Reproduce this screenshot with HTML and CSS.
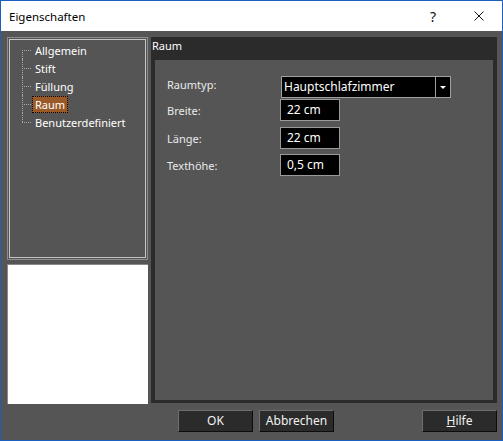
FILE: index.html
```html
<!DOCTYPE html>
<html lang="de">
<head>
    <meta charset="UTF-8">
    <title>Eigenschaften</title>
    <link rel="stylesheet" href="styles.css">
</head>
<body>
    <div class="window">
        <!-- Titelleiste -->
        <div class="titlebar">
            <span class="title">Eigenschaften</span>
            <div class="caption-btns">
                <span class="cap-btn help">?</span>
                <span class="cap-btn close">
                    <svg width="10" height="10" viewBox="0 0 10 10"><path d="M0.5 0.5 L9.5 9.5 M9.5 0.5 L0.5 9.5" stroke="#111" stroke-width="1" fill="none"/></svg>
                </span>
            </div>
        </div>

        <div class="dialog">
            <div class="main">
                <!-- Linke Spalte: Baum + Vorschau -->
                <div class="sidebar">
                    <div class="tree-frame">
                        <div class="tree-inner">
                            <ul class="tree">
                                <li><span class="node">Allgemein</span></li>
                                <li><span class="node">Stift</span></li>
                                <li><span class="node">Füllung</span></li>
                                <li><span class="node selected">Raum</span></li>
                                <li><span class="node">Benutzerdefiniert</span></li>
                            </ul>
                        </div>
                    </div>
                    <div class="preview"></div>
                </div>

                <!-- Rechte Seite -->
                <div class="page">
                    <div class="page-title">Raum</div>
                    <div class="page-body">
                        <div class="row row-type">
                            <span class="label label-top">Raumtyp:</span>
                            <div class="combo">
                                <span class="combo-text">Hauptschlafzimmer</span>
                                <span class="combo-btn"><span class="arrow"></span></span>
                            </div>
                        </div>
                        <div class="row row-width">
                            <span class="label">Breite:</span>
                            <span class="field">22 cm</span>
                        </div>
                        <div class="row row-length">
                            <span class="label">Länge:</span>
                            <span class="field">22 cm</span>
                        </div>
                        <div class="row">
                            <span class="label">Texthöhe:</span>
                            <span class="field">0,5 cm</span>
                        </div>
                    </div>
                </div>
            </div>

            <!-- Knöpfe -->
            <div class="buttons">
                <span class="btn">OK</span>
                <span class="btn">Abbrechen</span>
                <span class="btn btn-help"><u>H</u>ilfe</span>
            </div>
        </div>
    </div>
</body>
</html>
```

FILE: styles.css
```css
body {
    margin: 0;
    font-family: "Noto Sans", "Liberation Sans", sans-serif;
    font-size: 11px;
    background-color: #fff;
}

.window {
    width: 503px;
    height: 441px;
    box-sizing: border-box;
    border: 1px solid #1b5fbf;
    background-color: #555555;
    display: flex;
    flex-direction: column;
}

/* Titelleiste */
.titlebar {
    height: 30px;
    background-color: #fff;
    display: flex;
    align-items: center;
    justify-content: space-between;
}

.title {
    padding-left: 8px;
    font-size: 11.5px;
    color: #000;
}

.caption-btns {
    display: flex;
    height: 100%;
}

.cap-btn {
    width: 46px;
    height: 100%;
    display: flex;
    align-items: center;
    justify-content: center;
}

.help {
    font-size: 14px;
    color: #111;
    padding-bottom: 1px;
}

/* Dialog */
.dialog {
    flex: 1;
    padding: 6px 5px 8px 6px;
    display: flex;
    flex-direction: column;
}

.main {
    height: 367px;
    display: grid;
    grid-template-columns: 141px 1fr;
    column-gap: 3px;
}

.sidebar {
    display: grid;
    grid-template-rows: 223px 140px;
    row-gap: 4px;
}

.tree-frame {
    border: 1px solid #8c8c8c;
    padding: 1px;
}

.tree-inner {
    height: 100%;
    box-sizing: border-box;
    border: 1px solid #c4c4c4;
}

.tree {
    list-style: none;
    margin: 0;
    padding: 1px 0 0 0;
}

.tree li {
    position: relative;
    height: 18px;
    padding-left: 22px;
    display: flex;
    align-items: center;
}

/* Punktlinien des Baums */
.tree li::before {
    content: "";
    position: absolute;
    left: 12px;
    top: 9px;
    width: 9px;
    border-top: 1px dotted #a8a8a8;
}

.tree li::after {
    content: "";
    position: absolute;
    left: 12px;
    top: 0;
    height: 18px;
    border-left: 1px dotted #a8a8a8;
}

.tree li:first-child::after {
    top: 9px;
    height: 9px;
}

.tree li:last-child::after {
    height: 9px;
}

.node {
    color: #fff;
    padding: 0 2px;
    line-height: 15px;
    border: 1px solid transparent;
}

.node.selected {
    background-color: #995a28;
    border: 1px dotted #000;
}

.preview {
    background-color: #fff;
    border-top: 1px solid #8a8a8a;
    border-left: 1px solid #8a8a8a;
}

/* Rechte Seite */
.page {
    height: 366px;
    background-color: #2b2b2b;
    display: flex;
    flex-direction: column;
}

.page-title {
    height: 23px;
    line-height: 18px;
    padding-left: 1px;
    color: #fff;
}

.page-body {
    flex: 1;
    margin: 0 4px 3px 4px;
    background-color: #555555;
    padding: 16px 0 0 12px;
}

.row {
    display: flex;
    align-items: center;
    height: 22px;
}

.row-type {
    margin-bottom: 1px;
}

.row-width {
    margin-bottom: 6px;
}

.row-length {
    margin-bottom: 5px;
}

.label {
    width: 113px;
    color: #eaeaea;
}

.label-top {
    align-self: flex-start;
    line-height: 16px;
    margin-top: 1px;
}

.combo {
    display: flex;
    height: 22px;
}

.combo-text {
    width: 155px;
    box-sizing: border-box;
    padding-left: 2px;
    background-color: #000;
    border: 1px solid #a0a0a0;
    color: #fff;
    font-size: 12px;
    line-height: 20px;
    margin-left: 1px;
}

.combo-btn {
    width: 15px;
    box-sizing: border-box;
    background-color: #000;
    border: 1px solid #a0a0a0;
    border-left: none;
    display: flex;
    align-items: center;
    justify-content: center;
}

.arrow {
    width: 0;
    height: 0;
    border-left: 3px solid transparent;
    border-right: 3px solid transparent;
    border-top: 3px solid #fff;
}

.field {
    width: 60px;
    height: 22px;
    box-sizing: border-box;
    background-color: #000;
    border: 1px solid #9a9a9a;
    color: #fff;
    font-size: 12px;
    line-height: 20px;
    padding-left: 6px;
}

/* Knöpfe */
.buttons {
    margin-top: 6px;
    display: flex;
    gap: 6px;
    padding-left: 171px;
}

.btn {
    width: 75px;
    height: 22px;
    box-sizing: border-box;
    background-color: #2b2b2b;
    border: 1px solid;
    border-color: #6e6e6e #0d0d0d #0d0d0d #6e6e6e;
    color: #f2f2f2;
    font-size: 12px;
    line-height: 20px;
    text-align: center;
}

.btn-help {
    margin-left: auto;
}
```
